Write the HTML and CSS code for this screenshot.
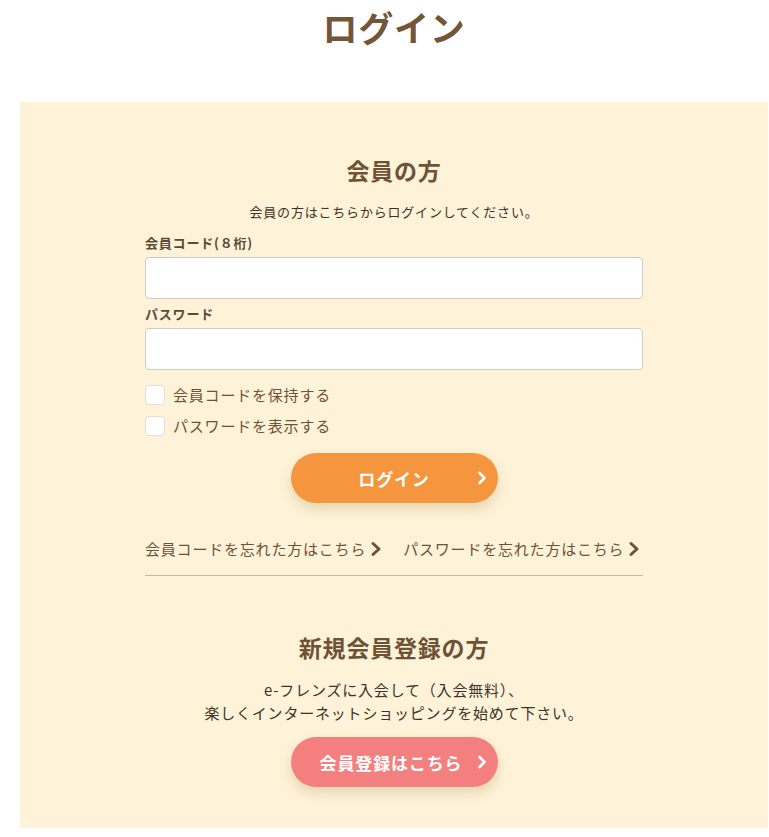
FILE: index.html
```html
<!DOCTYPE html>
<html lang="ja">
<head>
<meta charset="utf-8">
<title>ログイン</title>
<link rel="stylesheet" href="styles.css">
</head>
<body>
<div class="page">
<h1 class="page-title">ログイン</h1>

<div class="panel">
	<form class="box" action="#" method="post">
		<h2 class="box-title">会員の方</h2>
		<p class="lead">会員の方はこちらからログインしてください。</p>

		<label class="field-label" for="code">会員コード(８桁)</label>
		<input class="field" type="text" id="code" name="code">

		<label class="field-label" for="pw">パスワード</label>
		<input class="field" type="password" id="pw" name="pw">

		<label class="check first"><input type="checkbox" name="keep"><span class="check-box"></span>会員コードを保持する</label>
		<label class="check"><input type="checkbox" name="show"><span class="check-box"></span>パスワードを表示する</label>

		<div class="btn-row">
			<button class="btn btn-login" type="submit">ログイン
				<svg class="btn-arrow" width="10" height="14" viewBox="0 0 10 14"><path d="M2.5 2 L7.5 7 L2.5 12" fill="none" stroke="#fff" stroke-width="2.6" stroke-linecap="round" stroke-linejoin="round"/></svg>
			</button>
		</div>

		<div class="links">
			<a href="#">会員コードを忘れた方はこちら<svg class="link-arrow" width="12" height="16" viewBox="0 0 12 16"><path d="M3 2.5 L9 8 L3 13.5" fill="none" stroke="#6e5236" stroke-width="3" stroke-linecap="round" stroke-linejoin="round"/></svg></a>
			<a href="#">パスワードを忘れた方はこちら<svg class="link-arrow" width="12" height="16" viewBox="0 0 12 16"><path d="M3 2.5 L9 8 L3 13.5" fill="none" stroke="#6e5236" stroke-width="3" stroke-linecap="round" stroke-linejoin="round"/></svg></a>
		</div>

		<hr class="rule">

		<h2 class="box-title new">新規会員登録の方</h2>
		<p class="text">e-フレンズに入会して（入会無料）、<br>楽しくインターネットショッピングを始めて下さい。</p>

		<div class="btn-row join-row">
			<a class="btn btn-join" href="#">会員登録はこちら
				<svg class="btn-arrow" width="10" height="14" viewBox="0 0 10 14"><path d="M2.5 2 L7.5 7 L2.5 12" fill="none" stroke="#fff" stroke-width="2.6" stroke-linecap="round" stroke-linejoin="round"/></svg>
			</a>
		</div>
	</form>
</div>
</div>
</body>
</html>
```

FILE: styles.css
```css
body {
	margin: 0;
	font-family: "Noto Sans CJK JP", "Noto Sans", sans-serif;
	color: #6e5236;
	background: #fff;
	letter-spacing: 0.05em;
}
.page {
	margin: 0 1px 8px 20px;
}
.page-title {
	margin: 0;
	padding-top: 2px;
	text-align: center;
	font-size: 35px;
	line-height: 50px;
	font-weight: 700;
	letter-spacing: 0.02em;
	color: #735638;
}
.panel {
	margin-top: 50px;
	background-color: #fef2d8;
	padding: 52px 0 41px;
}
.box {
	width: 498px;
	margin: 0 auto;
	display: flex;
	flex-direction: column;
}
.box-title {
	margin: 0;
	text-align: center;
	font-size: 23px;
	line-height: 32px;
	font-weight: 700;
	color: #6e5236;
}
.lead {
	margin: 16px 0 0;
	text-align: center;
	font-size: 13px;
	line-height: 20px;
	color: #3d3228;
}
.field-label {
	margin-top: 13px;
	font-size: 13px;
	line-height: 16px;
	font-weight: 700;
	color: #5c4a38;
}
.field {
	box-sizing: border-box;
	margin-top: 6px;
	width: 100%;
	height: 42px;
	border: 1px solid #cfcac2;
	border-radius: 4px;
	background: #fff;
	font-size: 15px;
}
.field + .field-label { margin-top: 7px; }
.check {
	display: flex;
	align-items: center;
	gap: 8px;
	font-size: 15px;
	line-height: 20px;
	color: #6e5236;
	margin-top: 11px;
}
.check.first { margin-top: 15px; }
.check input { display: none; }
.check-box {
	width: 20px;
	height: 20px;
	box-sizing: border-box;
	border: 1px solid #e3ddd2;
	border-radius: 4px;
	background: #fff;
}
.btn-row {
	display: flex;
	justify-content: center;
	margin-top: 17px;
}
.btn {
	position: relative;
	box-sizing: border-box;
	width: 207px;
	height: 50px;
	padding-right: 6px;
	border: none;
	border-radius: 25px;
	display: flex;
	align-items: center;
	justify-content: center;
	font-family: inherit;
	font-size: 17px;
	letter-spacing: 0.05em;
	font-weight: 700;
	color: #fff;
	text-decoration: none;
	box-shadow: 0 6px 12px rgba(160, 130, 60, 0.25);
	cursor: pointer;
}
.btn-login { background-color: #f5963f; }
.btn-join { background-color: #f47f7f; }
.btn-arrow {
	position: absolute;
	right: 11px;
	top: 18px;
}
.links {
	display: flex;
	gap: 21px;
	margin-top: 36px;
	font-size: 15px;
	line-height: 20px;
}
.links a {
	color: #6e5236;
	text-decoration: none;
	display: flex;
	align-items: center;
	gap: 4px;
	white-space: nowrap;
}
.rule {
	margin: 16px 0 0;
	border: none;
	border-top: 1px solid #c9b79d;
}
.box-title.new { margin-top: 55px; }
.text {
	margin: 15px 0 0;
	text-align: center;
	font-size: 15px;
	line-height: 23px;
	color: #3d3228;
}
.join-row { margin-top: 13px; }
```
